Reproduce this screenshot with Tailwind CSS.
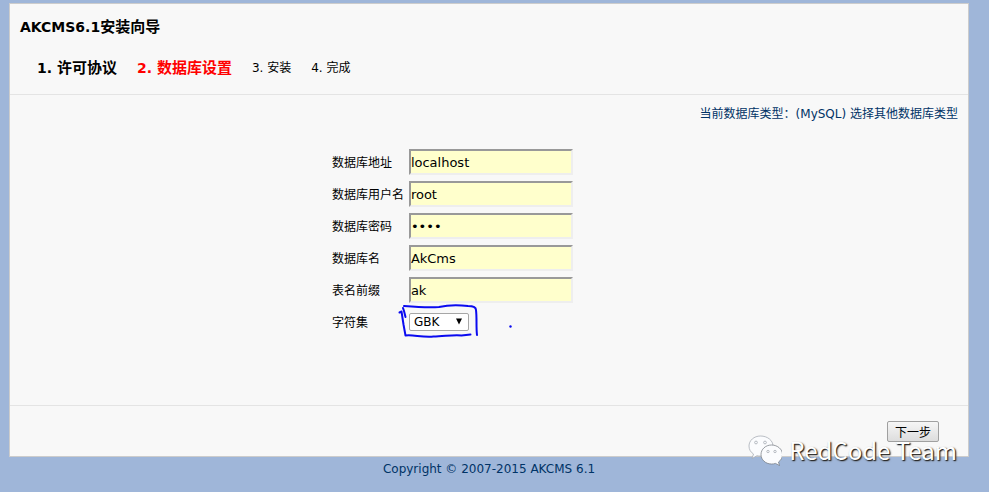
<!DOCTYPE html>
<html lang="zh-CN">
<head>
<meta charset="utf-8">
<meta name="viewport" content="width=device-width, initial-scale=1">
<title>AKCMS6.1安装向导</title>
<script src="https://cdn.jsdelivr.net/npm/@tailwindcss/browser@4"></script>
</head>
<body class="min-h-screen bg-[#9fb6d9] pt-[3px] pr-5 pl-[9px] font-['DejaVu_Sans','Noto_Sans_CJK_SC',sans-serif] text-[12px] leading-4 text-black">
<main class="relative border border-[#cccccc] bg-[#f8f8f8]">
  <header class="border-b border-[#e4e4e4] px-[10px] pt-[13px] pb-4">
    <h1 class="text-[14px] leading-5 font-bold">AKCMS6.1<span class="text-[15px]">安装向导</span></h1>
    <ol class="flex items-center gap-5 pt-[21px] pl-[17px] leading-5">
      <li class="text-[14px] font-bold">1. <span class="text-[15px]">许可协议</span></li>
      <li class="text-[14px] font-bold text-[#ff0000]">2. <span class="text-[15px]">数据库设置</span></li>
      <li>3. 安装</li>
      <li>4. 完成</li>
    </ol>
  </header>
  <form>
    <div class="px-[10px] pt-[11px] text-right text-[#003366]">
      <a href="#">当前数据库类型：(MySQL) 选择其他数据库类型</a>
    </div>
    <div class="ml-[33.6%] grid grid-cols-[77px_164px] items-center gap-y-[6px] pt-[27px] pb-[70px]">
      <label for="host" class="pt-[2px]">数据库地址</label>
      <input id="host" type="text" value="localhost" class="h-[26px] border-2 border-t-[#999999] border-r-[#eeeeee] border-b-[#eeeeee] border-l-[#999999] bg-[#ffffcc] text-[13px]">
      <label for="user" class="pt-[2px]">数据库用户名</label>
      <input id="user" type="text" value="root" class="h-[26px] border-2 border-t-[#999999] border-r-[#eeeeee] border-b-[#eeeeee] border-l-[#999999] bg-[#ffffcc] text-[13px]">
      <label for="pass" class="pt-[2px]">数据库密码</label>
      <input id="pass" type="password" value="root" class="h-[26px] border-2 border-t-[#999999] border-r-[#eeeeee] border-b-[#eeeeee] border-l-[#999999] bg-[#ffffcc] text-[13px]">
      <label for="name" class="pt-[2px]">数据库名</label>
      <input id="name" type="text" value="AkCms" class="h-[26px] border-2 border-t-[#999999] border-r-[#eeeeee] border-b-[#eeeeee] border-l-[#999999] bg-[#ffffcc] text-[13px]">
      <label for="prefix" class="pt-[2px]">表名前缀</label>
      <input id="prefix" type="text" value="ak" class="h-[26px] border-2 border-t-[#999999] border-r-[#eeeeee] border-b-[#eeeeee] border-l-[#999999] bg-[#ffffcc] text-[13px]">
      <label for="charset" class="pt-[2px]">字符集</label>
      <div class="relative flex h-[26px] items-center">
        <select id="charset" class="h-[18px] w-[60px] appearance-none rounded-xs border border-[#a6a6a6] bg-white pl-1 text-[12px] leading-4"><option>GBK</option><option>UTF-8</option></select>
        <svg class="pointer-events-none absolute top-[9px] left-[46px]" width="8" height="7" viewBox="0 0 8 7" aria-hidden="true"><path d="M1 0.500h6L4 6.500z" fill="#000"/></svg>
        <!-- Hand-drawn pen marks around the charset drop-down -->
        <svg class="pointer-events-none absolute -top-[14px] -left-[19px] max-w-none" width="130" height="50" viewBox="0 0 130 50" fill="none" stroke="#0a0af0" stroke-width="2" stroke-linecap="round" stroke-linejoin="round" aria-hidden="true">
          <path d="M9.500 17.500l2-1 2 13 2 11c8-1 16 2 28 1 10 0 20-2 28-1l9-1"/>
          <path d="M15.500 22l-1.500-6-1-3"/>
          <path d="M14 11c12 1 24 2 35 1 9-2 20-2 29-1 5 0 8 1 8 4 1 8 0 17 1 25"/>
          <circle cx="120.500" cy="31.500" r="1.200" fill="#0a0af0" stroke="none"/>
        </svg>
      </div>
    </div>
    <div class="flex justify-end border-t border-[#e4e4e4] pt-[15px] pr-[29px] pb-[14px]">
      <button type="button" class="h-[21px] w-[52px] rounded-xs border border-[#a0a0a0] bg-linear-to-b from-[#f6f6f6] to-[#dddddd] pt-[2px] text-[12px] leading-4">下一步</button>
    </div>
  </form>
  <div class="pointer-events-none absolute right-[11px] -bottom-[10px] flex items-center gap-[7px]">
    <svg width="34" height="32" viewBox="0 0 34 32" fill="#fbfcfe" stroke="#9da3ac" stroke-width=".7" aria-hidden="true">
      <path d="M12.500 2C6 2 1 6.500 1 12c0 3.400 1.700 6.300 4.500 8L4 24.500l5-2.800c1.200.3 2.300.4 3.500.4C19.500 22 25 17.500 25 12S19.500 2 12.500 2z"/>
      <circle cx="8" cy="8.500" r="1.400"/><circle cx="17" cy="8.500" r="1.400"/>
      <path stroke="#70757d" d="M23.500 11C17.500 11 13 15.300 13 20.500S17.500 30 23.500 30c1.400 0 2.700-.2 4-.6l4 2.100-1-3.500c2.600-1.800 4-4.500 4-7.500 0-5.200-5-9.500-11-9.500z"/>
      <circle cx="20" cy="17.500" r="1.200"/><circle cx="27" cy="17.500" r="1.200"/>
    </svg>
    <span class="font-['Noto_Sans_CJK_SC',sans-serif] text-[24px] leading-8 whitespace-nowrap text-white text-shadow-[1px_1px_1px_#222222,1px_1px_2px_#666666]">RedCode Team</span>
  </div>
</main>
<footer class="pt-1 text-center leading-4 text-[#003366]">Copyright © 2007-2015 AKCMS 6.1</footer>
</body>
</html>
